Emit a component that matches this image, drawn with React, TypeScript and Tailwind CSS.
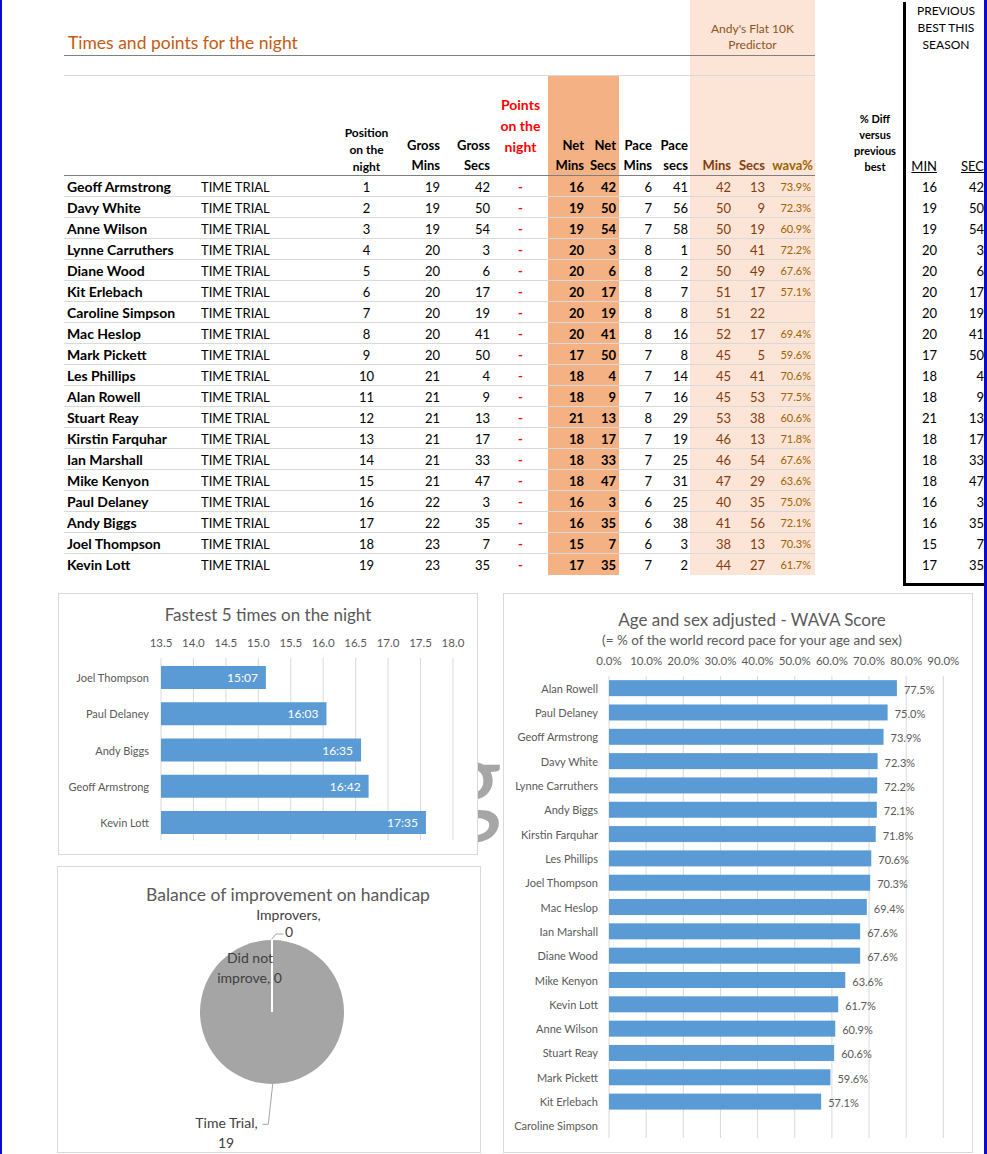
import React from "react";

type R = [string, number, number, number, number, number, number, number, number, number, string, number, number];

const rows: R[] = [
  ["Geoff Armstrong", 1, 19, 42, 16, 42, 6, 41, 42, 13, "73.9%", 16, 42],
  ["Davy White", 2, 19, 50, 19, 50, 7, 56, 50, 9, "72.3%", 19, 50],
  ["Anne Wilson", 3, 19, 54, 19, 54, 7, 58, 50, 19, "60.9%", 19, 54],
  ["Lynne Carruthers", 4, 20, 3, 20, 3, 8, 1, 50, 41, "72.2%", 20, 3],
  ["Diane Wood", 5, 20, 6, 20, 6, 8, 2, 50, 49, "67.6%", 20, 6],
  ["Kit Erlebach", 6, 20, 17, 20, 17, 8, 7, 51, 17, "57.1%", 20, 17],
  ["Caroline Simpson", 7, 20, 19, 20, 19, 8, 8, 51, 22, "", 20, 19],
  ["Mac Heslop", 8, 20, 41, 20, 41, 8, 16, 52, 17, "69.4%", 20, 41],
  ["Mark Pickett", 9, 20, 50, 17, 50, 7, 8, 45, 5, "59.6%", 17, 50],
  ["Les Phillips", 10, 21, 4, 18, 4, 7, 14, 45, 41, "70.6%", 18, 4],
  ["Alan Rowell", 11, 21, 9, 18, 9, 7, 16, 45, 53, "77.5%", 18, 9],
  ["Stuart Reay", 12, 21, 13, 21, 13, 8, 29, 53, 38, "60.6%", 21, 13],
  ["Kirstin Farquhar", 13, 21, 17, 18, 17, 7, 19, 46, 13, "71.8%", 18, 17],
  ["Ian Marshall", 14, 21, 33, 18, 33, 7, 25, 46, 54, "67.6%", 18, 33],
  ["Mike Kenyon", 15, 21, 47, 18, 47, 7, 31, 47, 29, "63.6%", 18, 47],
  ["Paul Delaney", 16, 22, 3, 16, 3, 6, 25, 40, 35, "75.0%", 16, 3],
  ["Andy Biggs", 17, 22, 35, 16, 35, 6, 38, 41, 56, "72.1%", 16, 35],
  ["Joel Thompson", 18, 23, 7, 15, 7, 6, 3, 38, 13, "70.3%", 15, 7],
  ["Kevin Lott", 19, 23, 35, 17, 35, 7, 2, 44, 27, "61.7%", 17, 35],
];

const fastest: [string, number, string][] = [
  ["Joel Thompson", 15 + 7 / 60, "15:07"],
  ["Paul Delaney", 16 + 3 / 60, "16:03"],
  ["Andy Biggs", 16 + 35 / 60, "16:35"],
  ["Geoff Armstrong", 16 + 42 / 60, "16:42"],
  ["Kevin Lott", 17 + 35 / 60, "17:35"],
];

const wava: [string, number | null][] = [
  ["Alan Rowell", 77.5],
  ["Paul Delaney", 75.0],
  ["Geoff Armstrong", 73.9],
  ["Davy White", 72.3],
  ["Lynne Carruthers", 72.2],
  ["Andy Biggs", 72.1],
  ["Kirstin Farquhar", 71.8],
  ["Les Phillips", 70.6],
  ["Joel Thompson", 70.3],
  ["Mac Heslop", 69.4],
  ["Ian Marshall", 67.6],
  ["Diane Wood", 67.6],
  ["Mike Kenyon", 63.6],
  ["Kevin Lott", 61.7],
  ["Anne Wilson", 60.9],
  ["Stuart Reay", 60.6],
  ["Mark Pickett", 59.6],
  ["Kit Erlebach", 57.1],
  ["Caroline Simpson", null],
];

function DataRow({ r, last }: { r: R; last: boolean }) {
  return (
    <div className="flex h-[21px]">
      <div
        className={`flex w-[751px] shrink-0 text-[13px] leading-[22px] ${
          last ? "" : "border-b border-[#d9d9d9]"
        }`}
      >
        <div className="w-[134px] shrink-0 whitespace-nowrap pl-[3px] text-[14px] font-bold">{r[0]}</div>
        <div className="w-[137px] shrink-0 pl-[3px]">TIME TRIAL</div>
        <div className="w-[63px] shrink-0 text-center">{r[1]}</div>
        <div className="w-[45px] shrink-0 pr-[3px] text-right">{r[2]}</div>
        <div className="w-[50px] shrink-0 pr-[3px] text-right">{r[3]}</div>
        <div className="w-[55px] shrink-0 text-center font-bold text-[#ff0000]">-</div>
        <div className="w-[39px] shrink-0 bg-[#f4b183] pr-[3px] text-right font-bold">{r[4]}</div>
        <div className="w-[32px] shrink-0 bg-[#f4b183] pr-[3px] text-right font-bold">{r[5]}</div>
        <div className="w-[36px] shrink-0 pr-[3px] text-right">{r[6]}</div>
        <div className="w-[35px] shrink-0 pr-[2px] text-right">{r[7]}</div>
        <div className="w-[44px] shrink-0 bg-[#fce4d6] pr-[3px] text-right text-[#843c0c]">{r[8]}</div>
        <div className="w-[34px] shrink-0 bg-[#fce4d6] pr-[3px] text-right text-[#843c0c]">{r[9]}</div>
        <div className="w-[47px] shrink-0 bg-[#fce4d6] pr-[4px] text-right text-[11px] text-[#9c6500]">{r[10]}</div>
      </div>
    </div>
  );
}

function Table() {
  return (
    <div className="w-[839px] shrink-0">
      {/* title row */}
      <div className="flex h-[56px]">
        <div className="flex w-[751px] shrink-0 border-b border-[#808080]">
          <div className="flex w-[626px] shrink-0 items-end pl-[4px] text-[17.5px] leading-[24px] text-[#c55a11]">
            Times and points for the night
          </div>
          <div className="w-[125px] shrink-0 bg-[#fce4d6] pt-[21px] text-center text-[12px] leading-[16px] text-[#8d5524]">
            Andy's Flat 10K
            <br />
            Predictor
          </div>
        </div>
      </div>
      {/* spacer row */}
      <div className="flex h-[20px]">
        <div className="flex w-[751px] shrink-0 border-b border-[#d9d9d9]">
          <div className="w-[626px] shrink-0" />
          <div className="w-[125px] shrink-0 bg-[#fce4d6]" />
        </div>
      </div>
      {/* header row */}
      <div className="flex h-[100px]">
        <div className="flex w-[751px] shrink-0 border-b border-[#7f7f7f] font-bold">
          <div className="w-[134px] shrink-0" />
          <div className="w-[137px] shrink-0" />
          <div className="flex w-[63px] shrink-0 items-end justify-center text-center text-[12px] leading-[17px]">
            <div>
              Position
              <br />
              on the
              <br />
              night
            </div>
          </div>
          <div className="flex w-[45px] shrink-0 items-end justify-end pr-[3px] text-right text-[13px] leading-[20px]">
            <div>
              Gross
              <br />
              Mins
            </div>
          </div>
          <div className="flex w-[50px] shrink-0 items-end justify-end pr-[3px] text-right text-[13px] leading-[20px]">
            <div>
              Gross
              <br />
              Secs
            </div>
          </div>
          <div className="flex w-[55px] shrink-0 items-center justify-center text-center text-[14px] leading-[21px] text-[#ff0000]">
            <div>
              Points
              <br />
              on the
              <br />
              night
            </div>
          </div>
          <div className="flex w-[39px] shrink-0 items-end justify-end bg-[#f4b183] pr-[3px] text-right text-[13px] leading-[20px]">
            <div>
              Net
              <br />
              Mins
            </div>
          </div>
          <div className="flex w-[32px] shrink-0 items-end justify-end bg-[#f4b183] pr-[3px] text-right text-[13px] leading-[20px]">
            <div>
              Net
              <br />
              Secs
            </div>
          </div>
          <div className="flex w-[36px] shrink-0 items-end justify-end pr-[3px] text-right text-[13px] leading-[20px]">
            <div>
              Pace
              <br />
              Mins
            </div>
          </div>
          <div className="flex w-[35px] shrink-0 items-end justify-end pr-[2px] text-right text-[13px] leading-[20px]">
            <div>
              Pace
              <br />
              secs
            </div>
          </div>
          <div className="flex w-[44px] shrink-0 items-end justify-end bg-[#fce4d6] pr-[3px] text-[13px] leading-[20px] text-[#843c0c]">
            Mins
          </div>
          <div className="flex w-[34px] shrink-0 items-end justify-end bg-[#fce4d6] pr-[3px] text-[13px] leading-[20px] text-[#843c0c]">
            Secs
          </div>
          <div className="flex w-[47px] shrink-0 items-end justify-end bg-[#fce4d6] pr-[2px] text-[13px] leading-[20px] text-[#9c6500]">
            wava%
          </div>
        </div>
        <div className="flex w-[88px] shrink-0 items-end justify-center pl-[32px] pb-[1px] text-center text-[11px] font-bold leading-[16px]">
          <div>
            % Diff
            <br />
            versus
            <br />
            previous
            <br />
            best
          </div>
        </div>
      </div>
      {rows.map((r, i) => (
        <DataRow key={r[0]} r={r} last={i === rows.length - 1} />
      ))}
    </div>
  );
}

function PrevBox() {
  return (
    <div className="mt-[2px] h-[584px] w-[81px] shrink-0 border-b-[3px] border-l-[3px] border-black">
      <div className="flex h-[174px] flex-col justify-between">
        <div className="pl-[2px] text-center text-[12px] leading-[17px]">
          PREVIOUS
          <br />
          BEST THIS
          <br />
          SEASON
        </div>
        <div className="flex text-[13px] leading-[20px]">
          <div className="w-[34px] shrink-0 pr-[3px] text-right underline">MIN</div>
          <div className="w-[44px] shrink-0 text-right underline">SEC</div>
        </div>
      </div>
      {rows.map((r) => (
        <div key={r[0]} className="flex h-[21px] text-[13px] leading-[22px]">
          <div className="w-[34px] shrink-0 pr-[3px] text-right">{r[11]}</div>
          <div className="w-[44px] shrink-0 text-right">{r[12]}</div>
        </div>
      ))}
    </div>
  );
}

function FastestChart() {
  const x0 = 102;
  const step = 32.44;
  const scale = step * 2;
  const ticks = ["13.5", "14.0", "14.5", "15.0", "15.5", "16.0", "16.5", "17.0", "17.5", "18.0"];
  const ys = [34, 70.25, 106.5, 142.75, 179];
  return (
    <div className="ml-[1px] h-[262px] w-[420px] border border-[#d9d9d9] bg-white">
      <div className="h-[38px] pt-[9px] text-center text-[17px] leading-[24px] text-[#595959]">
        Fastest 5 times on the night
      </div>
      <svg width="418" height="222" className="block">
        {ticks.map((t, i) => (
          <g key={t}>
            <line x1={x0 + i * step} x2={x0 + i * step} y1={26} y2={208} stroke="#d9d9d9" strokeWidth={1} />
            <text x={x0 + i * step} y={10} textAnchor="middle" dominantBaseline="central" fontSize={11.5} fill="#595959">
              {t}
            </text>
          </g>
        ))}
        {fastest.map(([n, v, lab], i) => {
          const end = x0 + (v - 13.5) * scale;
          return (
            <g key={n}>
              <rect x={x0} y={ys[i]} width={end - x0} height={23} fill="#5b9bd5" />
              <text x={90} y={ys[i] + 11.5} textAnchor="end" dominantBaseline="central" fontSize={11} fill="#595959">
                {n}
              </text>
              <text x={end - 8} y={ys[i] + 11.5} textAnchor="end" dominantBaseline="central" fontSize={12} fill="#ffffff">
                {lab}
              </text>
            </g>
          );
        })}
      </svg>
    </div>
  );
}

function PieChart() {
  return (
    <div className="mt-[11px] h-[287px] w-[424px] border border-[#d9d9d9] bg-white">
      <div className="h-[41px] pl-[38px] pt-[19px] text-center text-[17.5px] leading-[18px] text-[#595959]">
        Balance of improvement on handicap
      </div>
      <svg width="422" height="244" className="block overflow-visible">
        <circle cx={214} cy={104} r={72} fill="#a5a5a5" />
        <line x1={214} y1={32} x2={214} y2={104} stroke="#ffffff" strokeWidth={2} />
        <polyline points="213.7,31.3 218,26 225.3,26" fill="none" stroke="#a6a6a6" strokeWidth={1} />
        <polyline points="214.7,176 210.3,216.3 204.3,216.3" fill="none" stroke="#a6a6a6" strokeWidth={1} />
        <text x={230.5} y={6} textAnchor="middle" dominantBaseline="central" fontSize={14} fill="#404040">
          Improvers,
        </text>
        <text x={231} y={23} textAnchor="middle" dominantBaseline="central" fontSize={14} fill="#404040">
          0
        </text>
        <text x={192} y={49} textAnchor="middle" dominantBaseline="central" fontSize={14} fill="#404040">
          Did not
        </text>
        <text x={191.5} y={69} textAnchor="middle" dominantBaseline="central" fontSize={14} fill="#404040">
          improve, 0
        </text>
        <text x={168.5} y={214} textAnchor="middle" dominantBaseline="central" fontSize={14} fill="#404040">
          Time Trial,
        </text>
        <text x={168} y={234} textAnchor="middle" dominantBaseline="central" fontSize={14} fill="#404040">
          19
        </text>
      </svg>
    </div>
  );
}

function WavaChart() {
  const x0 = 105;
  const step = 37.15;
  const per = step / 10;
  const band = 24.32;
  const ticks = ["0.0%", "10.0%", "20.0%", "30.0%", "40.0%", "50.0%", "60.0%", "70.0%", "80.0%", "90.0%"];
  return (
    <div className="relative z-10 ml-[22px] h-[560px] w-[470px] border border-[#d9d9d9] bg-white">
      <div className="pl-[28px] pt-[14px] text-center text-[#595959]">
        <div className="text-[17px] leading-[24px]">Age and sex adjusted - WAVA Score</div>
        <div className="text-[13.5px] leading-[16px]">(= % of the world record pace for your age and sex)</div>
      </div>
      <svg width="468" height="504" className="block">
        {ticks.map((t, i) => (
          <g key={t}>
            <line x1={x0 + i * step} x2={x0 + i * step} y1={28} y2={490} stroke="#d9d9d9" strokeWidth={1} />
            <text x={x0 + i * step} y={12} textAnchor="middle" dominantBaseline="central" fontSize={11.5} fill="#595959">
              {t}
            </text>
          </g>
        ))}
        {wava.map(([n, v], i) => {
          const cy = 28 + i * band + band / 2;
          return (
            <g key={n}>
              <text x={94} y={cy} textAnchor="end" dominantBaseline="central" fontSize={11} fill="#595959">
                {n}
              </text>
              {v !== null && (
                <>
                  <rect x={x0} y={cy - 8} width={v * per} height={16} fill="#5b9bd5" />
                  <text x={x0 + v * per + 7} y={cy + 1} dominantBaseline="central" fontSize={11} fill="#595959">
                    {v.toFixed(1)}%
                  </text>
                </>
              )}
            </g>
          );
        })}
      </svg>
    </div>
  );
}

export default function App() {
  return (
    <div className="h-[1154px] w-[987px] overflow-hidden border-l-2 border-r-[3px] border-[#0a0ad2] bg-white font-['Lato',sans-serif] text-black">
      <div className="flex h-[586px]">
        <div className="w-[62px] shrink-0" />
        <Table />
        <PrevBox />
      </div>
      <div className="relative mt-[7px] flex">
        <div className="absolute left-[440px] top-[127px] z-0 text-[116px] leading-none text-[#a6a6a6]">g</div>
        <div className="w-[55px] shrink-0" />
        <div className="relative z-10 w-[424px] shrink-0">
          <FastestChart />
          <PieChart />
        </div>
        <WavaChart />
      </div>
    </div>
  );
}
